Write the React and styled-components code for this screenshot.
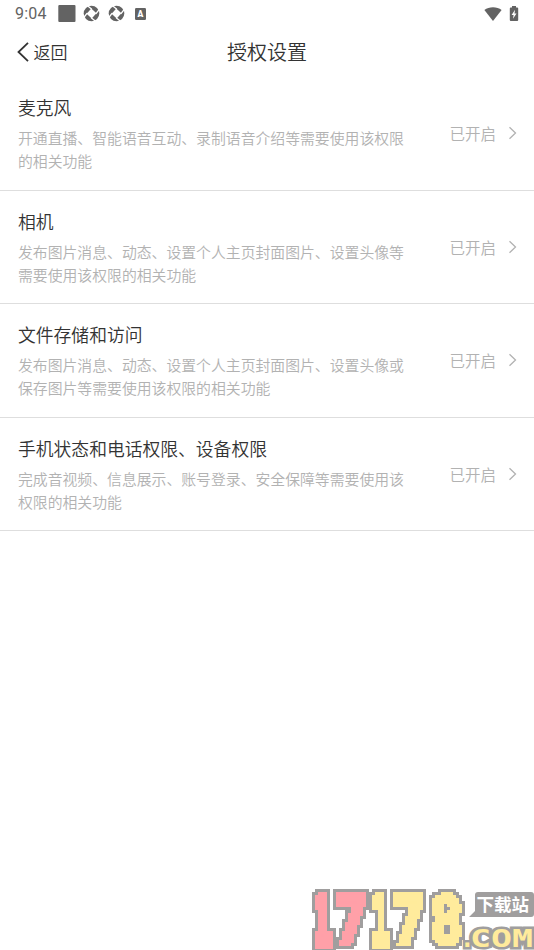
import React from 'react';
import styled, { createGlobalStyle } from 'styled-components';

const GlobalStyle = createGlobalStyle`
    * {
        box-sizing: border-box;
    }
    body {
        margin: 0;
        background: #fff;
        font-family: Roboto, 'Noto Sans CJK SC', sans-serif;
    }
`;
const PageStyle = styled.div`
    display: flex;
    flex-direction: column;
    height: 950px;
    overflow: hidden;
    background: #fff;
`;
const StatusBarStyle = styled.div`
    display: flex;
    justify-content: space-between;
    height: 27px;
    padding: 0 15px;
    color: #636363;
    svg {
        display: block;
    }
`;
const StatusGroup = styled.div`
    display: flex;
    align-items: center;
    gap: ${(props) => props.$gap};
`;
const Clock = styled.span`
    width: 36px;
    font-size: 16px;
    line-height: 28px;
    letter-spacing: 0.2px;
    white-space: nowrap;
`;
const HeaderStyle = styled.header`
    display: grid;
    grid-template-columns: 1fr auto 1fr;
    align-items: center;
    height: 50px;
    padding: 0 17px;
    color: #333;
`;
const BackButton = styled.button`
    display: flex;
    align-items: center;
    gap: 4.5px;
    padding: 0;
    border: 0;
    background: none;
    color: inherit;
    font: 350 17px/26px 'Noto Sans CJK SC', sans-serif;
`;
const HeaderTitle = styled.h1`
    margin: 0;
    font: 350 20px/30px 'Noto Sans CJK SC', sans-serif;
`;
const RowStyle = styled.div`
    display: flex;
    align-items: center;
    justify-content: space-between;
    height: 113.6px;
    padding: 0 17.5px 0 18px;
    border-bottom: 1px solid #dedede;
`;
const RowText = styled.div`
    width: 390px;
`;
const RowTitle = styled.h2`
    margin: 0 0 6px;
    color: #333;
    font: 350 17.8px/26px 'Noto Sans CJK SC', sans-serif;
`;
const RowDesc = styled.p`
    margin: 0;
    color: #b2b2b2;
    font: 350 14.85px/23px 'Noto Sans CJK SC', sans-serif;
`;
const RowState = styled.div`
    display: flex;
    align-items: center;
    gap: 11.5px;
    color: #b2b2b2;
    font: 350 15.5px/24px 'Noto Sans CJK SC', sans-serif;
`;
const WatermarkStyle = styled.div`
    position: absolute;
    left: 306px;
    top: 886px;
    width: 228px;
    height: 64px;
    svg {
        display: block;
    }
`;

const permissions = [
    {
        title: '麦克风',
        desc: ['开通直播、智能语音互动、录制语音介绍等需要使用该权限', '的相关功能']
    },
    {
        title: '相机',
        desc: ['发布图片消息、动态、设置个人主页封面图片、设置头像等', '需要使用该权限的相关功能']
    },
    {
        title: '文件存储和访问',
        desc: ['发布图片消息、动态、设置个人主页封面图片、设置头像或', '保存图片等需要使用该权限的相关功能']
    },
    {
        title: '手机状态和电话权限、设备权限',
        desc: ['完成音视频、信息展示、账号登录、安全保障等需要使用该', '权限的相关功能']
    }
];

const IconAperture = () => (
    <svg width="17" height="17" viewBox="0 0 17 17">
        <circle cx="8.5" cy="8.5" r="7.8" fill="currentColor" />
        <path d="M8.300 3.600 13.400 8.300 8.700 13.400 3.600 8.700z" fill="#fff" />
        <path
            d="M8.800 4.200 4.500.8M12.800 8.800 16.200 4.500M8.200 12.800l4.300 3.400M4.200 8.200.8 12.500"
            stroke="#fff"
            strokeWidth="1.300"
        />
    </svg>
);

const IconSquareA = () => (
    <svg width="11" height="12" viewBox="0 0 11 12">
        <rect width="11" height="12" rx="1.2" fill="currentColor" />
        <text x="5.5" y="9" fill="#fff" fontFamily="Roboto" fontWeight="900" fontSize="8.5" textAnchor="middle">
            A
        </text>
    </svg>
);

const StatusBar = () => (
    <StatusBarStyle>
        <StatusGroup $gap="7.2px">
            <Clock>9:04</Clock>
            <svg width="18" height="17" viewBox="0 0 18 17">
                <rect x=".3" width="17.2" height="17" rx="1" fill="currentColor" />
            </svg>
            <IconAperture />
            <IconAperture />
            <svg width="18" height="12" viewBox="0 0 18 12">
                <g transform="translate(3)">
                    <IconSquareA />
                </g>
            </svg>
        </StatusGroup>
        <StatusGroup $gap="7px">
            <svg width="18" height="14" viewBox="0 0 18 14">
                <path d="M9 14 .4 3C5-.8 13-.8 17.600 3z" fill="currentColor" />
            </svg>
            <svg width="10" height="15" viewBox="0 0 10 15">
                <path d="M3 0h4v1.500h1.200q1 0 1 1V14q0 1-1 1H1.800q-1 0-1-1V2.500q0-1 1-1H3z" fill="currentColor" />
                <path d="M6 3.700 2.600 9h2l-.6 3.700L7.500 7.500h-2z" fill="#fff" />
            </svg>
        </StatusGroup>
    </StatusBarStyle>
);

const PermissionRow = ({ title, desc }) => (
    <RowStyle>
        <RowText>
            <RowTitle>{title}</RowTitle>
            <RowDesc>
                {desc[0]}
                <br />
                {desc[1]}
            </RowDesc>
        </RowText>
        <RowState>
            已开启
            <svg width="9" height="14" viewBox="0 0 9 14">
                <path d="m1.500 1.300 6 5.700-6 5.700" fill="none" stroke="#b2b2b2" strokeWidth="1.300" />
            </svg>
        </RowState>
    </RowStyle>
);

const digits = [
    { char: '1', x: 7.5, width: 18.5, weight: 8, fill: '#ffa0a8' },
    { char: '7', x: 28, width: 34, weight: 5, fill: '#ffa0a8' },
    { char: '1', x: 65.5, width: 18.5, weight: 8, fill: '#ffeb9c' },
    { char: '7', x: 86, width: 34, weight: 5, fill: '#ffeb9c' },
    { char: '8', x: 123.5, width: 33.5, weight: 4.5, fill: '#ffeb9c' }
];

const Watermark = () => (
    <WatermarkStyle>
        <svg width="228" height="64" viewBox="0 0 228 64">
            <defs>
                {/* samples the text on a 3px grid, then puts a square outline round it */}
                <filter id="blocks" x="0" y="0" width="228" height="64" filterUnits="userSpaceOnUse" colorInterpolationFilters="sRGB">
                    <feFlood x="1" y="1" width="1" height="1" floodColor="#000" />
                    <feOffset dx="0" dy="0" x="0" y="0" width="3" height="3" />
                    <feTile result="grid" />
                    <feComponentTransfer in="SourceGraphic" result="hard">
                        <feFuncA type="discrete" tableValues="0 1" />
                    </feComponentTransfer>
                    <feComposite in="hard" in2="grid" operator="in" />
                    <feMorphology operator="dilate" radius="1" result="body" />
                    <feMorphology in="body" operator="dilate" radius="3" result="wide" />
                    <feFlood floodColor="#a09e9e" />
                    <feComposite in2="wide" operator="in" result="edge" />
                    <feMerge>
                        <feMergeNode in="edge" />
                        <feMergeNode in="body" />
                    </feMerge>
                </filter>
            </defs>
            <g filter="url(#blocks)" fontFamily="DejaVu Sans" fontWeight="700" fontSize="65">
                {digits.map(({ char, x, width, weight, fill }) => (
                    <text
                        key={x}
                        x={x}
                        y="57.500"
                        textLength={width}
                        lengthAdjust="spacingAndGlyphs"
                        fill={fill}
                        stroke={fill}
                        strokeWidth={weight}
                    >
                        {char}
                    </text>
                ))}
            </g>
            <path d="M172 6h53q3 0 3 3v19q0 3-3 3h-62l6-6V9q0-3 3-3z" fill="#a09e9e" />
            <text
                x="170.500"
                y="25"
                fill="#fff"
                fontFamily="Noto Sans CJK SC"
                fontWeight="700"
                fontSize="17.500"
            >
                下载站
            </text>
            <g
                fill="#ffeb9c"
                stroke="#a09e9e"
                strokeWidth="5"
                paintOrder="stroke"
                fontFamily="DejaVu Sans Mono"
                fontWeight="700"
                fontSize="24"
            >
                <text x="154" y="60.500">
                    .
                </text>
                <text x="164" y="60.500" textLength="63" lengthAdjust="spacingAndGlyphs">
                    COM
                </text>
            </g>
        </svg>
    </WatermarkStyle>
);

export default function App() {
    return (
        <PageStyle>
            <GlobalStyle />
            <StatusBar />
            <HeaderStyle>
                <BackButton type="button">
                    <svg width="12" height="20" viewBox="0 0 12 20">
                        <path d="m11 .8-9.500 9.200 9.500 9.200" fill="none" stroke="#333" strokeWidth="1.800" />
                    </svg>
                    返回
                </BackButton>
                <HeaderTitle>授权设置</HeaderTitle>
            </HeaderStyle>
            {permissions.map((item) => (
                <PermissionRow key={item.title} {...item} />
            ))}
            <Watermark />
        </PageStyle>
    );
}
